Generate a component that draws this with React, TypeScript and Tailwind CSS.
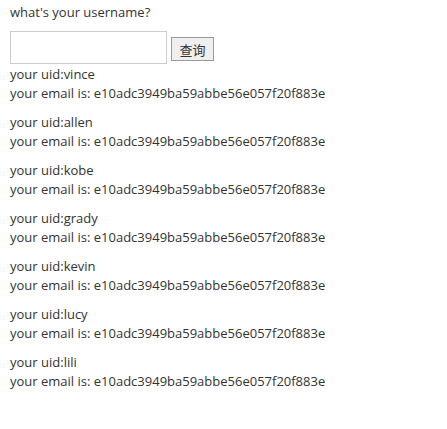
const users = ["vince", "allen", "kobe", "grady", "kevin", "lucy", "lili"];
const hash = "e10adc3949ba59abbe56e057f20f883e";

export default function App() {
  return (
    <div className="bg-white min-h-[429px] px-[10px] text-[13px] leading-[19px] text-[#333] font-['Open_Sans',sans-serif]">
      <p className="pt-[3px]">what's your username?</p>
      <div className="flex items-end mt-[9px]">
        <input
          type="text"
          className="w-[157px] h-[33px] border border-[#ccc] outline-none"
        />
        <button className="ml-[4px] mb-[3px] w-[43px] h-[24px] border border-[#999] bg-[#efefef] text-[13px] text-[#333] font-['Noto_Sans_CJK_SC',sans-serif] leading-none">
          查询
        </button>
      </div>
      <div className="mt-[1px]">
        {users.map((u) => (
          <div key={u} className="mb-[10px]">
            <p>your uid:{u}</p>
            <p>your email is: {hash}</p>
          </div>
        ))}
      </div>
    </div>
  );
}
